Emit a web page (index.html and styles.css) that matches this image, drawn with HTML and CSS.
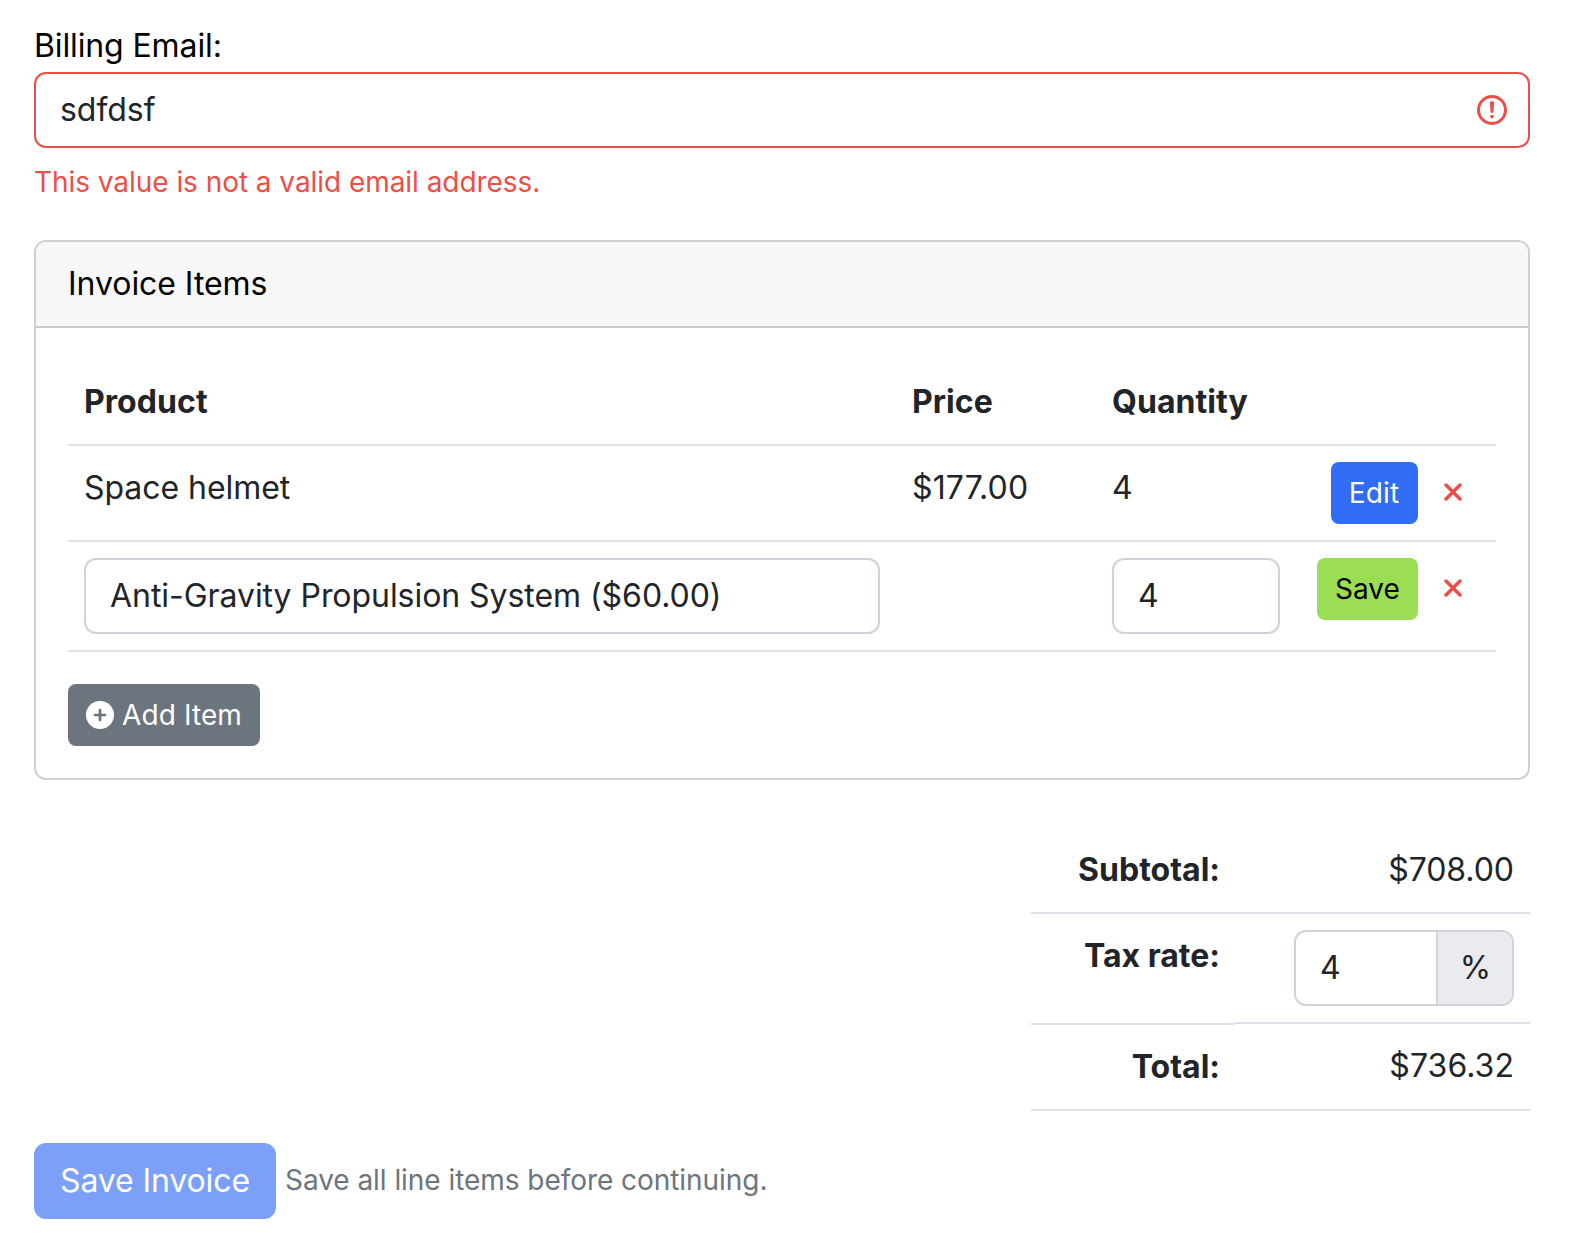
FILE: index.html
```
<!DOCTYPE html>
<html lang="en">
<head>
<meta charset="utf-8">
<title>Invoice</title>
<link rel="stylesheet" href="styles.css">
</head>
<body>
<form class="invoice">
  <label class="label" for="email">Billing Email:</label>
  <div class="field field-invalid">
    <input class="field-input" id="email" type="text" value="sdfdsf">
    <svg class="field-icon" viewBox="0 0 12 12" fill="none" stroke="currentColor"><circle cx="6" cy="6" r="4.5"/><path stroke-linejoin="round" d="M5.8 3.6h.4L6 6.5z"/><circle cx="6" cy="8.2" r=".6" fill="currentColor" stroke="none"/></svg>
  </div>
  <div class="feedback">This value is not a valid email address.</div>

  <section class="card">
    <header class="card-header">Invoice Items</header>
    <div class="card-body">
      <div class="items">
        <div class="item-row head"><div>Product</div><div>Price</div><div>Quantity</div><div></div></div>
        <div class="item-row">
          <div>Space helmet</div><div class="money">$177.00</div><div>4</div>
          <div class="actions">
            <button class="btn btn-sm btn-edit" type="button">Edit</button>
            <button class="remove" type="button" aria-label="Remove"><svg viewBox="0 0 18 18"><path d="M2 2L16 16M16 2L2 16"/></svg></button>
          </div>
        </div>
        <div class="item-row">
          <div><div class="field"><input class="field-input" type="text" value="Anti-Gravity Propulsion System ($60.00)"></div></div>
          <div></div>
          <div class="qty"><div class="field"><input class="field-input" type="text" value="4"></div></div>
          <div class="actions">
            <button class="btn btn-sm btn-save" type="button">Save</button>
            <button class="remove" type="button" aria-label="Remove"><svg viewBox="0 0 18 18"><path d="M2 2L16 16M16 2L2 16"/></svg></button>
          </div>
        </div>
      </div>
      <button class="btn btn-sm btn-add" type="button"><svg class="plus" viewBox="0 0 28 28"><circle cx="14" cy="14" r="14" fill="#fff"/><path d="M14 9V19M9 14H19" stroke="#6c757d" stroke-width="2.7" stroke-linecap="round"/></svg>Add Item</button>
    </div>
  </section>

  <div class="totals">
    <div class="total-row"><div class="total-name">Subtotal:</div><div class="total-value">$708.00</div></div>
    <div class="total-row tax"><div class="total-name">Tax rate:</div>
      <div class="total-value"><div class="field group"><input class="field-input" type="text" value="4"><span class="addon">%</span></div></div></div>
    <div class="total-row last"><div class="total-name">Total:</div><div class="total-value">$736.32</div></div>
  </div>

  <div class="footer">
    <button class="btn btn-submit" type="button" disabled>Save Invoice</button>
    <small class="hint">Save all line items before continuing.</small>
  </div>
</form>
</body>
</html>
```
FILE: styles.css
```
* { box-sizing: border-box; }
body {
  margin: 0;
  background: #fff;
  color: #212529;
  font: 32px/52px Inter, "Liberation Sans", sans-serif;
  letter-spacing: -0.05px;
}
.invoice { padding: 20px 48px 0 34px; }
.label { display: block; color: #000; letter-spacing: -0.12px; }
.field {
  display: flex;
  align-items: center;
  height: 76px;
  border: 2px solid #ced4da;
  border-radius: 12px;
  background: #fff;
}
.field-input {
  flex: 1;
  min-width: 0;
  height: 72px;
  padding: 0 24px 2px;
  border: 0;
  outline: 0;
  background: none;
  color: #212529;
  font: inherit;
  letter-spacing: inherit;
}
.field-invalid { padding-right: 18px; border-color: #eb4f47; }
.field-icon { width: 36px; height: 36px; color: #eb4f47; }
.feedback { margin-top: 13px; color: #eb4f47; font-size: 28px; line-height: 42px; }

.card { margin-top: 37px; border: 2px solid #d0d0d0; border-radius: 12px; overflow: hidden; }
.card-header { padding: 16px 32px; border-bottom: 2px solid #cacaca; background: #f7f7f7; color: #000; }
.card-body { padding: 32px; height: 450px; }
.item-row {
  display: grid;
  grid-template-columns: 828px 200px 200px 200px;
  padding: 16px 0;
  border-bottom: 2px solid #dee2e6;
}
.item-row > div { padding: 0 16px; }
.head { min-height: 86px; font-weight: 700; letter-spacing: 0.06px; }
.money { letter-spacing: 0.15px; }
.item-row > .actions { display: flex; justify-content: flex-end; padding-right: 34px; }
.btn {
  border: 0;
  border-radius: 12px;
  padding: 0 26px;
  height: 76px;
  font: inherit;
  color: #fff;
}
.btn-sm { height: 62px; padding: 0 17px; border-radius: 8px; font-size: 28px; }
.btn-edit { width: 87px; padding: 0 18px 0 17px; background: #316cf4; letter-spacing: 0.2px; }
.btn-save { width: 101px; background: #9bdd53; color: #000; }
.remove { height: 60px; margin-left: 26px; padding: 0; border: 0; background: none; display: flex; align-items: center; }
.remove svg { width: 18px; height: 18px; fill: none; stroke: #eb4f47; stroke-width: 3.5; stroke-linecap: round; }
.btn-add { display: flex; align-items: center; width: 192px; margin-top: 32px; padding: 0 18px; background: #6c757d; letter-spacing: 0.1px; }
.plus { width: 28px; height: 28px; margin-right: 8px; flex: none; }

.totals { width: 499px; margin: 48px 0 0 auto; }
.total-row { display: grid; grid-template-columns: 204px 295px; align-items: start; }
.total-row > div { height: 86px; padding: 16px; border-bottom: 2px solid #dee2e6; text-align: right; }
.total-row > .total-name { padding-right: 15px; font-weight: 700; letter-spacing: 0; }
.tax > .total-name { height: 111px; }
.tax > .total-value { height: 110px; }
.last > .total-value { margin-top: -1px; height: 87px; letter-spacing: 0.05px; }
.group { width: 220px; margin-left: auto; overflow: hidden; }
.addon { width: 76px; height: 72px; padding-left: 1px; border-left: 2px solid #ced4da; background: #e9ebef; text-align: center; line-height: 72px; }

.footer { display: flex; align-items: center; gap: 9px; margin-top: 32px; }
.btn-submit { width: 242px; padding: 0; background: #7ca0f8; letter-spacing: -0.12px; }
.hint { padding-bottom: 2px; color: #6c757d; font-size: 28px; }
```
